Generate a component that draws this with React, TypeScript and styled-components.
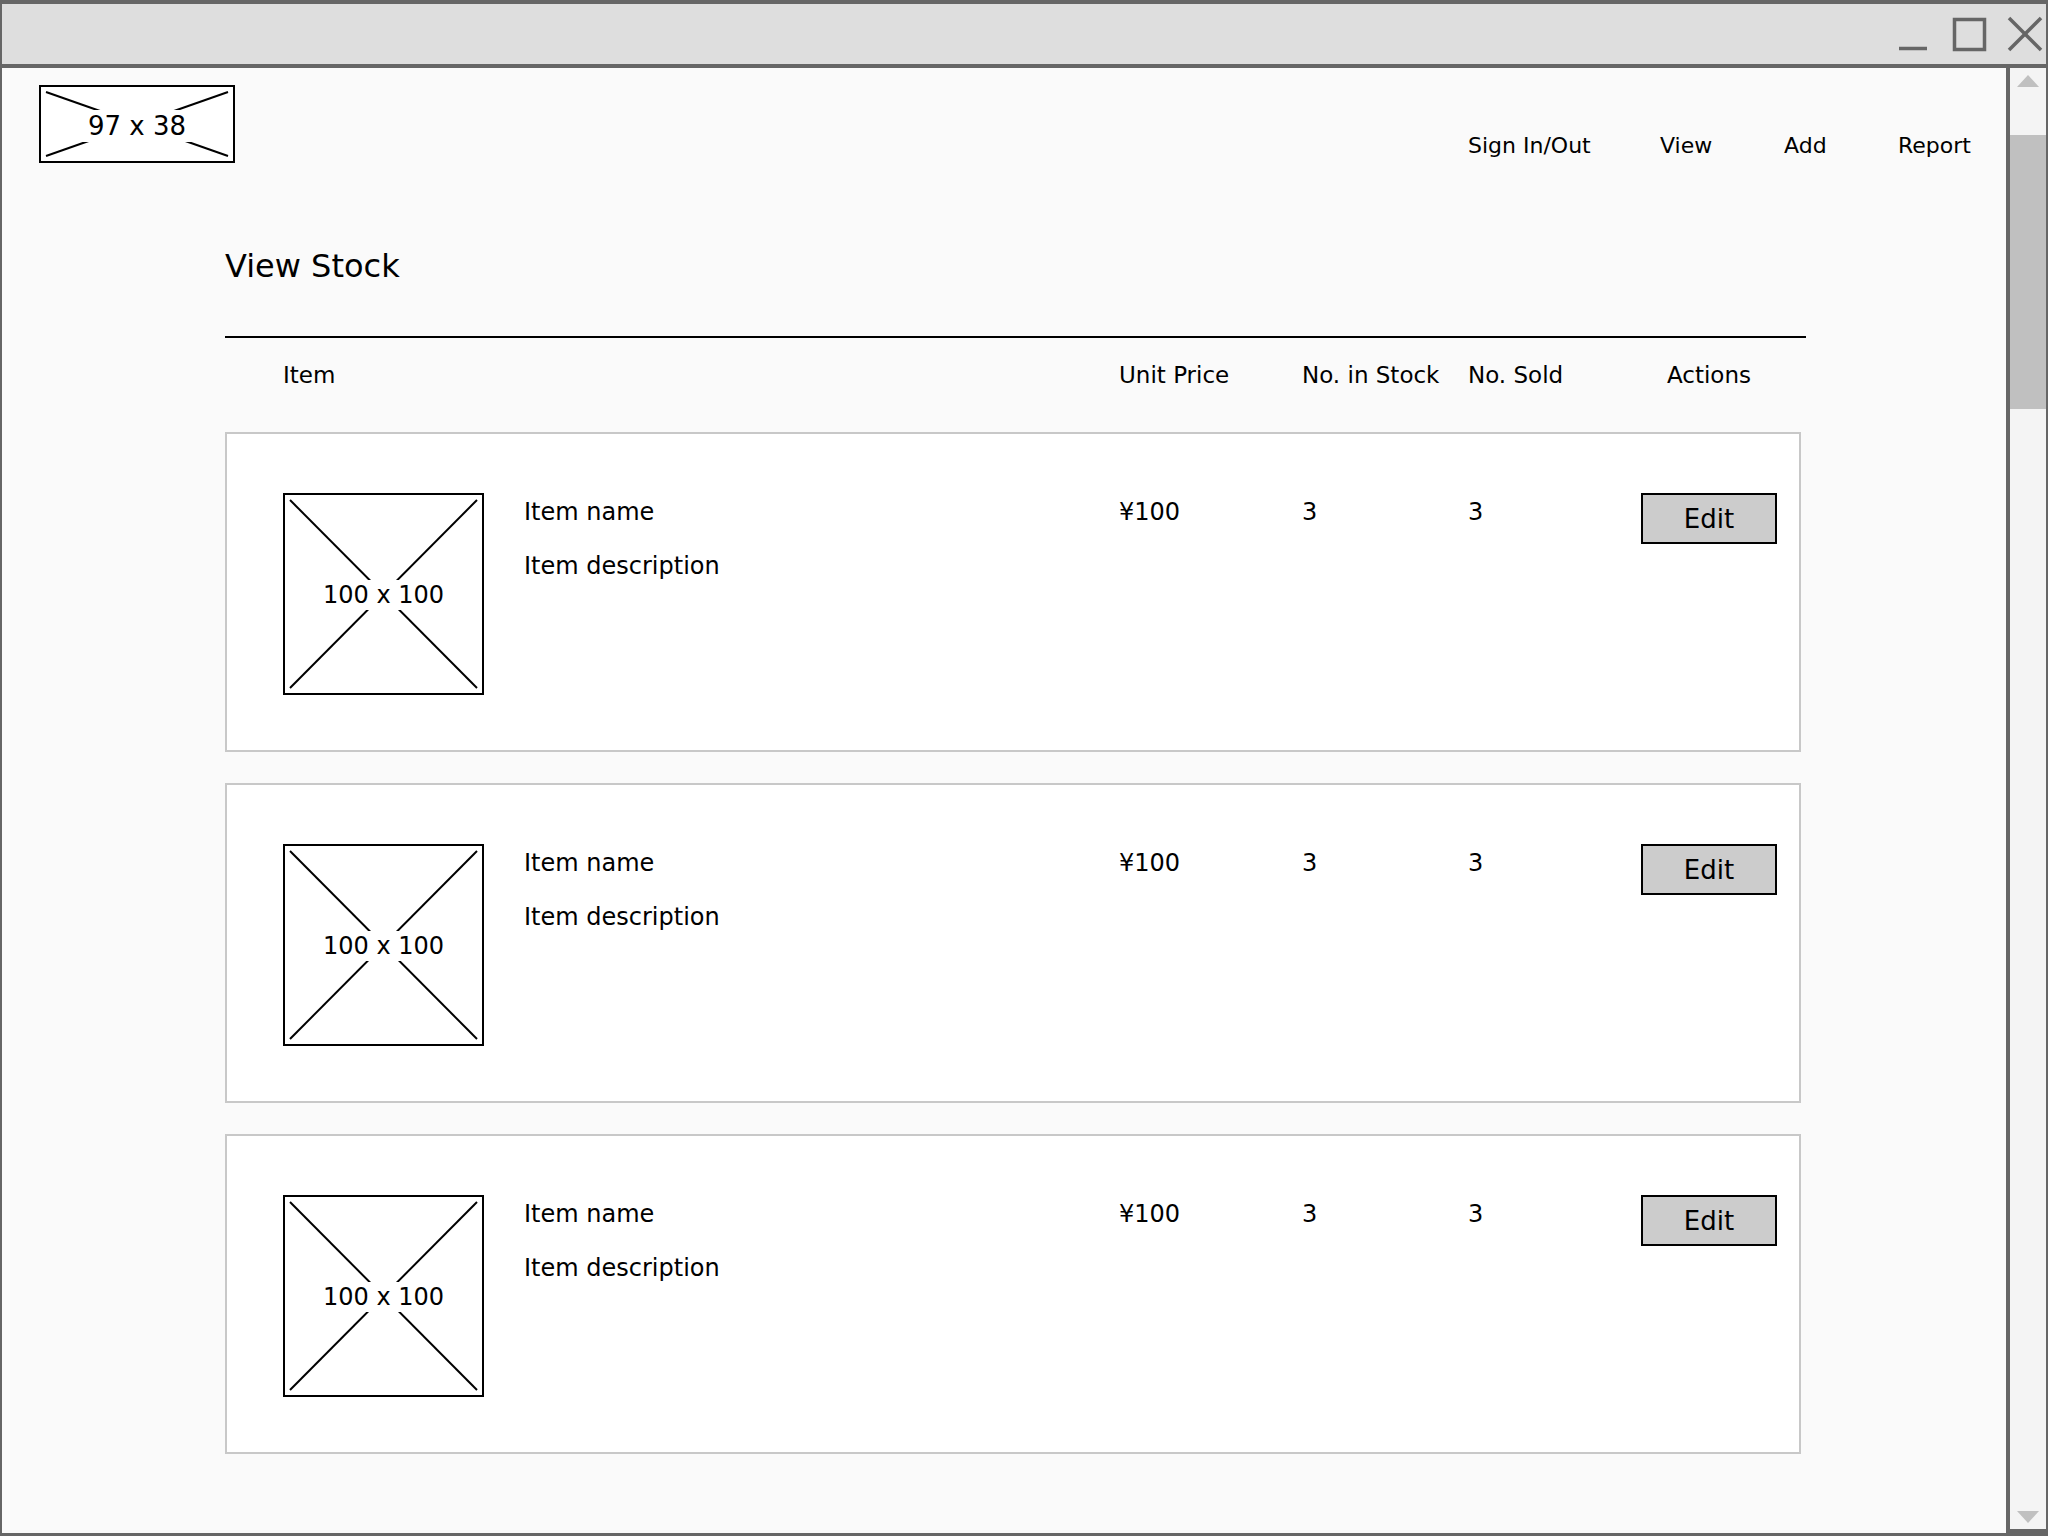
import React from "react";
import styled, { createGlobalStyle } from "styled-components";

const FONT = `"DejaVu Sans", "Noto Sans", sans-serif`;
const COLS = "241px 595px 183px 166px 173px 136px";

const GlobalStyle = createGlobalStyle`
  html, body { margin: 0; padding: 0; }
  body { background: #fafafa; font-family: ${FONT}; color: #000; }
  *, *::before, *::after { box-sizing: border-box; }
`;

const Window = styled.div`
  width: 2048px;
  height: 1536px;
  border-style: solid;
  border-color: #666;
  border-width: 4px 2px 3px 2px;
  display: flex;
  flex-direction: column;
  overflow: hidden;
`;

const TitleBar = styled.header`
  flex: none;
  height: 64px;
  background: #dedede;
  border-bottom: 4px solid #666;
  display: flex;
  justify-content: flex-end;
  padding-right: 1px;
`;

const Body = styled.div`
  flex: 1;
  min-height: 0;
  display: flex;
`;

const Content = styled.main`
  flex: 1;
  background: #fafafa;
  display: flex;
  flex-direction: column;
  overflow: hidden;
`;

const Scrollbar = styled.aside`
  flex: none;
  width: 40px;
  background: #f4f4f4;
  border-left: 4px solid #666;
  border-bottom: 4px solid #666;
  display: flex;
  flex-direction: column;
`;

const ArrowZone = styled.div<{ $down?: boolean }>`
  flex: none;
  height: ${(p) => (p.$down ? "auto" : "67px")};
  display: flex;
  justify-content: center;
  padding-top: ${(p) => (p.$down ? "0" : "7px")};
  padding-bottom: ${(p) => (p.$down ? "6px" : "0")};
`;

const Thumb = styled.div`
  flex: none;
  height: 274px;
  background: #c0c0c0;
`;

const Track = styled.div`
  flex: 1;
`;

const TopBar = styled.div`
  display: flex;
  justify-content: space-between;
  align-items: flex-start;
  padding: 17px 0 0 37px;
`;

const Placeholder = styled.div<{ $w: number; $h: number }>`
  width: ${(p) => p.$w}px;
  height: ${(p) => p.$h}px;
  display: grid;
  flex: none;
  & > * {
    grid-area: 1 / 1;
  }
`;

const PlaceholderLabel = styled.span<{ $size: number; $nudge?: number }>`
  place-self: center;
  background: #fff;
  font-size: ${(p) => p.$size}px;
  line-height: 1.1;
  padding: 2px 7px;
  margin-top: ${(p) => p.$nudge ?? 0}px;
  white-space: nowrap;
`;

const Nav = styled.nav`
  display: grid;
  grid-template-columns: 192px 124px 114px 108px;
  margin-top: 46px;
`;

const NavLink = styled.a`
  font-size: 22px;
  line-height: 30px;
  color: #000;
  text-decoration: none;
  white-space: nowrap;
`;

const Main = styled.section`
  display: flex;
  flex-direction: column;
  padding-left: 223px;
`;

const Title = styled.h1`
  margin: 80px 0 0;
  font-size: 32px;
  line-height: 46px;
  font-weight: normal;
`;

const Rule = styled.hr`
  width: 1581px;
  height: 2px;
  margin: 47px 0 0;
  border: none;
  background: #000;
`;

const HeaderRow = styled.div`
  display: grid;
  grid-template-columns: ${COLS};
  padding-left: 58px;
  margin-top: 21px;
  font-size: 23px;
  line-height: 32px;
`;

const HeaderCell = styled.div<{ $span?: number; $center?: boolean }>`
  grid-column: span ${(p) => p.$span ?? 1};
  text-align: ${(p) => (p.$center ? "center" : "left")};
  white-space: nowrap;
`;

const CardList = styled.div`
  display: flex;
  flex-direction: column;
  gap: 31px;
  margin-top: 41px;
`;

const Card = styled.article`
  width: 1576px;
  height: 320px;
  background: #fff;
  border: 2px solid #c8c8c8;
  display: grid;
  grid-template-columns: ${COLS};
  align-items: start;
  padding: 59px 0 0 56px;
`;

const ItemInfo = styled.div`
  display: flex;
  flex-direction: column;
  gap: 22px;
  padding-top: 3px;
  font-size: 24px;
  line-height: 32px;
`;

const Cell = styled.div`
  padding-top: 3px;
  font-size: 24px;
  line-height: 32px;
  white-space: nowrap;
`;

const EditButton = styled.button`
  width: 136px;
  height: 51px;
  border: 2px solid #000;
  background: #cccccc;
  font-family: ${FONT};
  font-size: 26px;
  color: #000;
  padding: 0;
  display: flex;
  align-items: center;
  justify-content: center;
`;

const WindowControls = () => (
  <svg width="150" height="60" viewBox="0 0 150 60">
    <g stroke="#666" strokeWidth="3.5" fill="none">
      <line x1="4" y1="44.5" x2="32" y2="44.5" />
      <rect x="59.5" y="15.5" width="30" height="30" />
      <line x1="114" y1="14" x2="146" y2="46" />
      <line x1="146" y1="14" x2="114" y2="46" />
    </g>
  </svg>
);

const Arrow = ({ down }: { down?: boolean }) => (
  <svg width="22" height="12" viewBox="0 0 22 12">
    <polygon points={down ? "0,0 22,0 11,12" : "0,12 22,12 11,0"} fill="#c0c0c0" />
  </svg>
);

const Frame = ({ w, h, inset }: { w: number; h: number; inset: number }) => (
  <svg width={w} height={h} viewBox={`0 0 ${w} ${h}`}>
    <rect x="1" y="1" width={w - 2} height={h - 2} fill="#fff" stroke="#000" strokeWidth="2" />
    <g stroke="#000" strokeWidth="2">
      <line x1={inset} y1={inset} x2={w - inset} y2={h - inset} />
      <line x1={w - inset} y1={inset} x2={inset} y2={h - inset} />
    </g>
  </svg>
);

const items = [0, 1, 2].map((i) => ({
  id: i,
  name: "Item name",
  description: "Item description",
  price: "¥100",
  stock: "3",
  sold: "3",
}));

export default function App() {
  return (
    <>
      <GlobalStyle />
      <Window>
        <TitleBar>
          <WindowControls />
        </TitleBar>
        <Body>
          <Content>
            <TopBar>
              <Placeholder $w={196} $h={78}>
                <Frame w={196} h={78} inset={7} />
                <PlaceholderLabel $size={26} $nudge={4}>97 x 38</PlaceholderLabel>
              </Placeholder>
              <Nav>
                <NavLink>Sign In/Out</NavLink>
                <NavLink>View</NavLink>
                <NavLink>Add</NavLink>
                <NavLink>Report</NavLink>
              </Nav>
            </TopBar>
            <Main>
              <Title>View Stock</Title>
              <Rule />
              <HeaderRow>
                <HeaderCell $span={2}>Item</HeaderCell>
                <HeaderCell>Unit Price</HeaderCell>
                <HeaderCell>No. in Stock</HeaderCell>
                <HeaderCell>No. Sold</HeaderCell>
                <HeaderCell $center>Actions</HeaderCell>
              </HeaderRow>
              <CardList>
                {items.map((it) => (
                  <Card key={it.id}>
                    <Placeholder $w={201} $h={202}>
                      <Frame w={201} h={202} inset={7} />
                      <PlaceholderLabel $size={24} $nudge={2}>100 x 100</PlaceholderLabel>
                    </Placeholder>
                    <ItemInfo>
                      <span>{it.name}</span>
                      <span>{it.description}</span>
                    </ItemInfo>
                    <Cell>{it.price}</Cell>
                    <Cell>{it.stock}</Cell>
                    <Cell>{it.sold}</Cell>
                    <EditButton>Edit</EditButton>
                  </Card>
                ))}
              </CardList>
            </Main>
          </Content>
          <Scrollbar>
            <ArrowZone>
              <Arrow />
            </ArrowZone>
            <Thumb />
            <Track />
            <ArrowZone $down>
              <Arrow down />
            </ArrowZone>
          </Scrollbar>
        </Body>
      </Window>
    </>
  );
}
